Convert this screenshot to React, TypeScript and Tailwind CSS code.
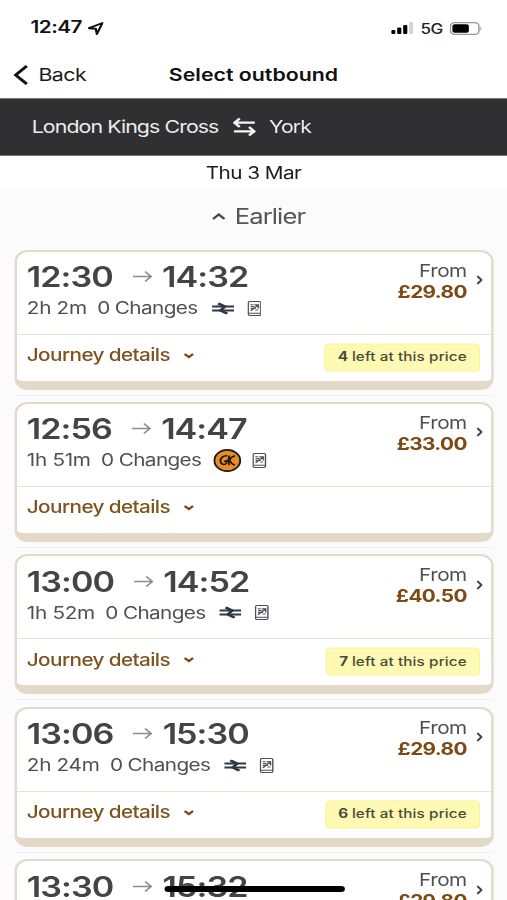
interface Journey {
  departs: string;
  arrives: string;
  duration: string;
  operator: "NR" | "GC";
  price: string;
  left?: number;
}

const journeys: Journey[] = [
  { departs: "12:30", arrives: "14:32", duration: "2h 2m", operator: "NR", price: "£29.80", left: 4 },
  { departs: "12:56", arrives: "14:47", duration: "1h 51m", operator: "GC", price: "£33.00" },
  { departs: "13:00", arrives: "14:52", duration: "1h 52m", operator: "NR", price: "£40.50", left: 7 },
  { departs: "13:06", arrives: "15:30", duration: "2h 24m", operator: "NR", price: "£29.80", left: 6 },
  { departs: "13:30", arrives: "15:32", duration: "2h 2m", operator: "NR", price: "£29.80" },
];

const NationalRailIcon = () => (
  <svg className="mr-[1px] h-3 w-[18px]" viewBox="0 0 18 12" fill="none" stroke="#2f3744" strokeWidth="1.9">
    <path d="M0 4H18M0 8H18" />
    <path d="M5 0.9L10.5 4L7 8L12.5 11.3" strokeWidth="2.5" />
  </svg>
);

const GrandCentralIcon = () => (
  <svg className="h-[23px] w-[23px]" viewBox="0 0 23 23" fill="none" stroke="#1c1712" strokeLinecap="round">
    <circle cx="11.5" cy="11.5" r="10.6" fill="#e78b2b" strokeWidth="1.6" />
    <path d="M11.2 6.8C8.2 6.4 5.8 9 5.9 12C6 15.6 9.5 16.6 10.8 14L11.2 11.8L9.4 12.3" strokeWidth="1.5" />
    <path d="M13.2 7.2L12.3 11.3L13 15.6M17.4 7C15.4 7.6 13.9 9.4 13.3 11.2C14.2 13.4 15.4 15.2 17.2 15.8" strokeWidth="1.5" />
  </svg>
);

const TicketIcon = () => (
  <svg className="h-4 w-[11.5px]" viewBox="0 0 12 16" fill="none" stroke="#4b5058">
    <rect x="0.7" y="0.7" width="10.6" height="14.6" rx="1.2" strokeWidth="1.2" />
    <path d="M1 12.9H11" strokeWidth="1.1" />
    <path d="M2.6 4.1H5.2M6 4.2H9.4V8M2.8 6.1H5.8M2.8 10.4L9 4.6M2.8 8.1H5M6.8 9.6H9.2M6.5 6.2V8.6" strokeWidth="1.2" />
  </svg>
);

const JourneyCard = ({ journey }: { journey: Journey }) => (
  <div className="h-[152.4px] shrink-0">
    <div className="h-[140px] rounded-[11px] border-2 border-b-[9px] border-[#e4d9c9] bg-white">
      <div className="flex h-[83px] justify-between border-b-[1.5px] border-[#e8e1d6] pl-[8.5px] pr-[6.5px]">
        <div>
          <div className="mt-2 flex h-[35px] items-center text-[28px] font-semibold tracking-[-0.8px] text-[#444]">
            <span>{journey.departs}</span>
            <svg className="ml-[16px] mr-[8.5px] h-3 w-4 -translate-y-[0.5px]" viewBox="0 0 16 12" fill="none" stroke="#8b8d94" strokeWidth="1.5">
              <path d="M0 6H15M10 1L15 6L10 11" />
            </svg>
            <span>{journey.arrives}</span>
          </div>
          <div className="flex h-7 items-center text-[17px] text-[#505050]">
            <span className="tracking-[-0.25px]">{journey.duration}</span>
            <span className="ml-[8.5px] mr-[10px] tracking-[-0.5px]">0 Changes</span>
            {journey.operator === "GC" ? (
              <div className="-mr-[1px]"><GrandCentralIcon /></div>
            ) : (
              <div className="ml-[1.5px] -translate-y-[0.5px]"><NationalRailIcon /></div>
            )}
            <div className="ml-[10px] -translate-y-[0.5px]"><TicketIcon /></div>
          </div>
        </div>
        <div className="flex items-start">
          <div className="mt-[9px] text-right text-[17px] leading-[21px]">
            <p className="tracking-[-0.4px] text-[#505050]">From</p>
            <p className="font-bold tracking-[-0.5px] text-[#7c4a12]">{journey.price}</p>
          </div>
          <svg className="ml-2 mt-[23.5px] h-[10px] w-[5px]" viewBox="0 0 5 10" fill="none" stroke="#444" strokeWidth="1.9">
            <path d="M0.6 1L4 5L0.6 9" />
          </svg>
        </div>
      </div>
      <div className="flex h-[46px] items-center justify-between pl-[8.5px] pr-[8.5px]">
        <div className="flex -translate-y-[2px] items-center text-[17px] font-medium tracking-[-0.5px] text-[#7d531f]">
          Journey details
          <svg className="ml-[11.5px] h-[6px] w-[8px]" viewBox="0 0 8 6" fill="none" stroke="#7c4a12" strokeWidth="2.2">
            <path d="M0.5 1L4 4L7.5 1" />
          </svg>
        </div>
        {journey.left && (
          <div className="flex h-[28px] -translate-y-[0.5px] items-center rounded border-[1.5px] border-[#f7f392] bg-[#fefab3] px-[10px] text-[12.5px] font-medium tracking-[0.1px] text-[#4a4a3c]">
            <span className="mr-[3px] font-bold">{journey.left}</span>left at this price
          </div>
        )}
      </div>
    </div>
    <div className="mt-[5px] h-px bg-[#eeeeef]" />
  </div>
);

const StatusBar = () => (
  <div className="flex h-[56px] items-center justify-between pl-[25px] pr-[20px]">
    <div className="flex items-center text-[17px] font-semibold tracking-[-0.4px] text-[#111]">
      12:47
      <svg className="ml-[5px] h-[13px] w-[13px]" viewBox="0 0 13 13" fill="none" stroke="#111" strokeWidth="1.9" strokeLinejoin="round">
        <path d="M1 6.2L12 1L7.5 12L6.6 6.8Z" />
      </svg>
    </div>
    <div className="flex items-center">
      <svg className="h-[12px] w-[18px]" viewBox="0 0 18 12">
        <rect x="0" y="8" width="3.4" height="4" rx="1" />
        <rect x="4.9" y="5.5" width="3.4" height="6.5" rx="1" />
        <rect x="9.8" y="3" width="3.4" height="9" rx="1" />
        <rect x="14.6" y="0" width="3.4" height="12" rx="1" fill="#d5d5d5" />
      </svg>
      <span className="ml-[6px] text-[14px] font-medium tracking-[-0.6px] text-[#222]">5G</span>
      <svg className="ml-[6px] h-[13px] w-[27px]" viewBox="0 0 27 13">
        <rect x="0.6" y="0.6" width="23.4" height="11.8" rx="3.4" fill="none" stroke="#999" strokeWidth="1.2" />
        <rect x="2.2" y="2.2" width="13.5" height="8.6" rx="1.8" />
        <path d="M25.2 4.5Q27 6.5 25.2 8.5Z" fill="#999" />
      </svg>
    </div>
  </div>
);

export default function App() {
  return (
    <div className="h-[900px] w-[507px] overflow-hidden bg-[#fbfbfb]">
      {/* The screen is laid out at 416px and widened to fill the window */}
      <div className="relative flex h-[900px] w-[416px] origin-left scale-x-[1.21875] flex-col overflow-hidden font-['Inter',sans-serif]">
        <div className="h-[98px] shrink-0 bg-white">
          <StatusBar />
          <div className="grid h-[38px] grid-cols-[1fr_auto_1fr] items-center px-[10.5px]">
            <div className="flex items-center text-[17.5px] tracking-[-0.4px] text-[#1a1a1a]">
              <svg className="mr-[9px] h-5 w-3" viewBox="0 0 12 20" fill="none" stroke="#111" strokeWidth="2.6">
                <path d="M11 1L1.8 10L11 19" />
              </svg>
              Back
            </div>
            <h1 className="text-[17.5px] font-semibold text-[#111]">Select outbound</h1>
          </div>
        </div>
        <div className="flex h-[57.5px] shrink-0 items-center border-y border-[#777] bg-[#303032] pl-[26px] text-[17.5px] tracking-[-0.75px] text-[#ececec]">
          London Kings Cross
          <svg className="ml-[11.5px] mr-[11px] h-5 w-[19px]" viewBox="0 0 20 20" fill="none" stroke="#f5f5f5" strokeWidth="2.4">
            <path d="M19 5.5H1.5M6 1L1.5 5.5L6 10M1 14.5H18.5M14 10L18.5 14.5L14 19" />
          </svg>
          York
        </div>
        <div className="flex h-[32.5px] shrink-0 items-center justify-center bg-white pt-[3px] text-[17px] tracking-[-0.45px] text-[#1c1c1c]">Thu 3 Mar</div>
        <div className="flex h-[61.5px] shrink-0 items-center justify-center pb-[4px] pl-[8px] text-[21px] tracking-[-0.75px] text-[#555]">
          <svg className="mr-[8px] h-[7px] w-[11px]" viewBox="0 0 11 7" fill="none" stroke="#444" strokeWidth="2">
            <path d="M0.8 6L5.5 1.5L10.2 6" />
          </svg>
          Earlier
        </div>
        <div className="px-[11.5px]">
          {journeys.map((journey) => (
            <JourneyCard key={journey.departs} journey={journey} />
          ))}
        </div>
        <div className="absolute bottom-[8px] left-[134.5px] h-[6px] w-[148px] rounded-full bg-black" />
      </div>
    </div>
  );
}
